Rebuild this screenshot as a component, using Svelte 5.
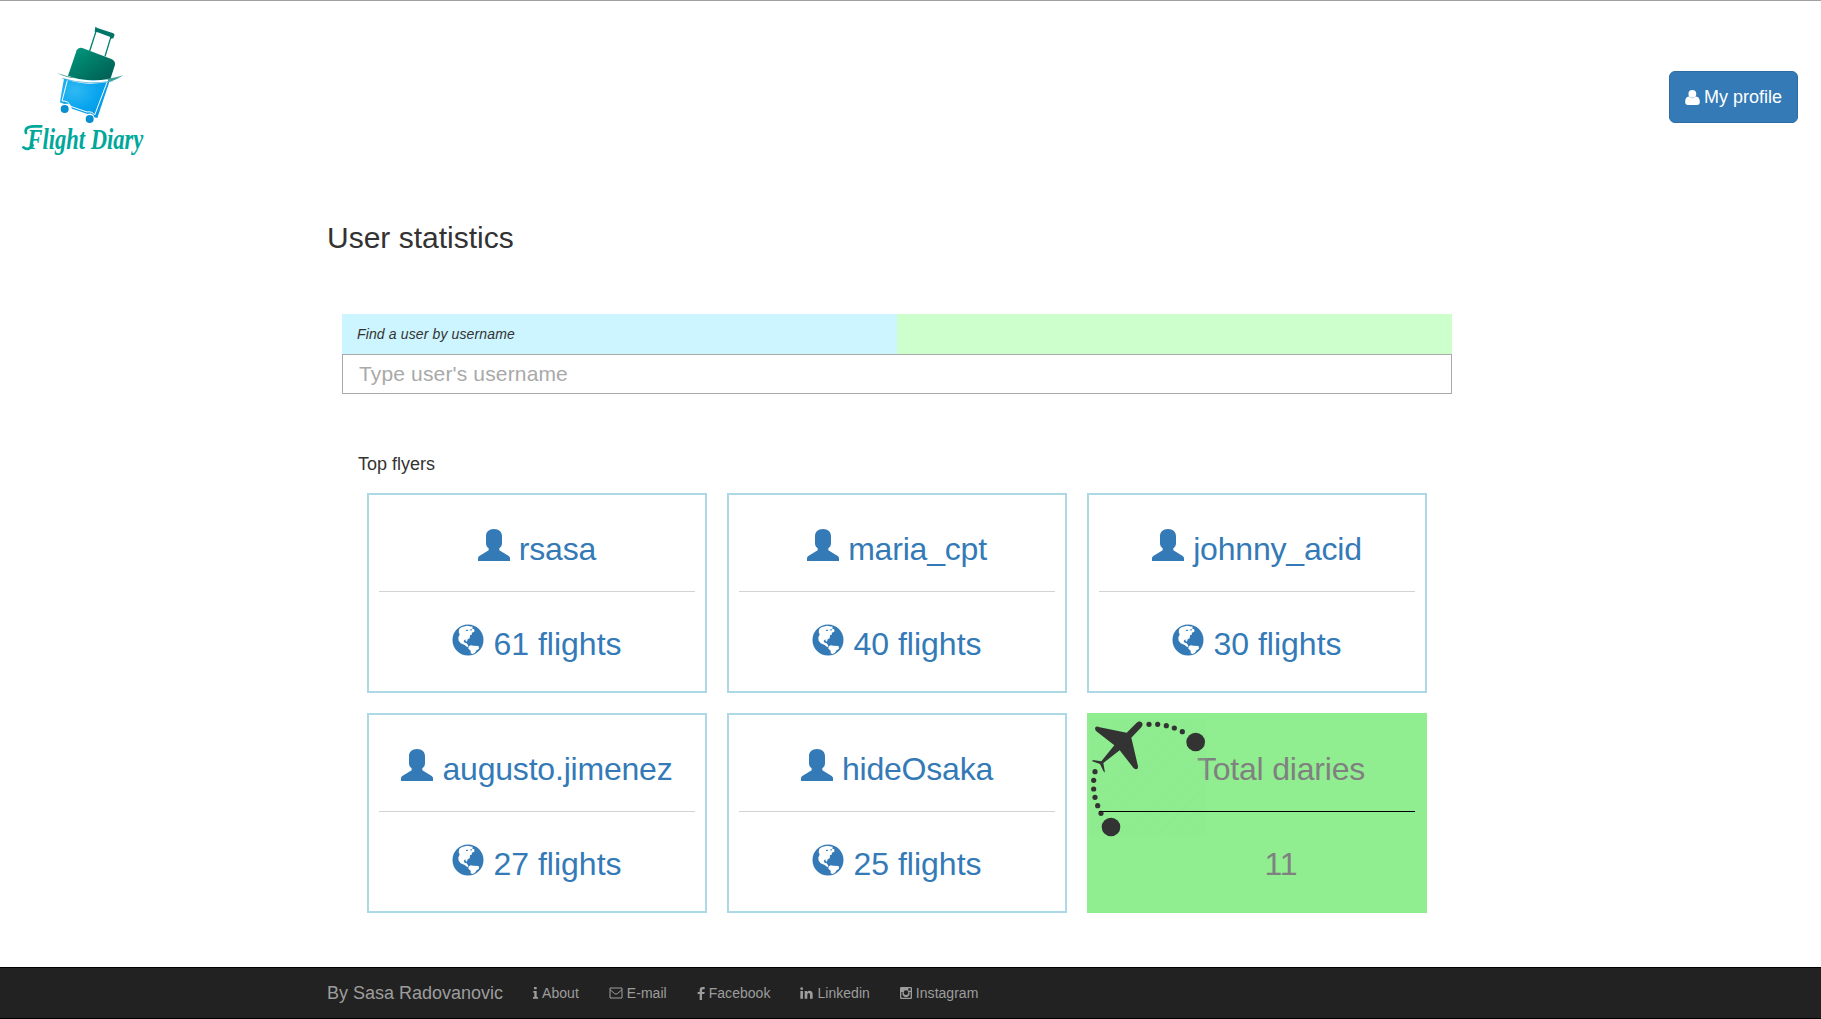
<script>
  const flyers = [
    { name: 'rsasa', flights: 61 },
    { name: 'maria_cpt', flights: 40 },
    { name: 'johnny_acid', flights: 30 },
    { name: 'augusto.jimenez', flights: 27 },
    { name: 'hideOsaka', flights: 25 }
  ];
  const totalDiaries = 11;
  let query = $state('');
</script>

<div class="page">
  <header>
    <svg class="logo" viewBox="0 0 540 540" role="img" aria-label="Flight Diary">
      <defs>
        <linearGradient id="shell" x1="0" y1="0" x2="1" y2="1">
          <stop offset="0" stop-color="#009b80" />
          <stop offset="1" stop-color="#00594f" />
        </linearGradient>
        <radialGradient id="base" cx=".3" cy=".3" r=".8">
          <stop offset="0" stop-color="#30b9f2" />
          <stop offset=".6" stop-color="#08a4ef" />
          <stop offset="1" stop-color="#0795dc" />
        </radialGradient>
      </defs>
      <path d="M288 94L269 153M333 110L315 169" stroke="#008070" stroke-width="4" fill="none" />
      <path d="M286 80L292 84L340 100L344 104L340 115L333 116L329 110L293 97L284 95Z" fill="#007568" />
      <path d="M230 151Q235 141 247 144L334 177Q346 182 345 194L330 241Q268 252 204 227Z" fill="url(#shell)" />
      <path d="M192 236L329 243L292 354L283 352Q278 337 263 342L216 326Q210 307 193 312L180 307L186 270Z" fill="url(#base)" />
      <path d="M202 241L186 303Q205 301 212 319L261 336Q276 333 284 345L321 247" fill="none" stroke="#fff" stroke-width="3" />
      <path d="M171 219Q207 236 267 241Q325 243 370 226Q336 252 266 251Q201 248 171 219Z" fill="#fff" />
      <path d="M171 219Q202 230 232 235Q200 235 171 219ZM370 226Q350 233 322 236L326 247Q350 240 370 226Z" fill="#3f9f95" />
      <path d="M186 235Q265 258 340 242" fill="none" stroke="#3aa9cf" stroke-width="2" />
      <circle cx="194" cy="327" r="12" fill="#078fd0" />
      <circle cx="269" cy="357" r="12" fill="#078fd0" />
      <path d="M70 442Q84 454 98 436M78 399Q72 380 100 379L124 379" class="swash" />
      <text class="wordmark" x="82" y="446" textLength="348" lengthAdjust="spacingAndGlyphs">Flight Diary</text>
    </svg>
    <button class="profile" type="button">
      <svg class="profile-icon" viewBox="0 0 45 46">
        <circle cx="22" cy="12" r="12" />
        <path d="M11 20Q22 30 33 20Q45 21 45 37Q45 46 36 46H9Q0 46 0 37Q0 21 11 20Z" />
      </svg>
      <span>My profile</span>
    </button>
  </header>

  <main>
    <h1>User statistics</h1>
    <section class="search">
      <label for="username">Find a user by username</label>
      <input id="username" type="text" placeholder="Type user's username" bind:value={query} />
    </section>

    <h2>Top flyers</h2>
    <section class="cards">
      {#each flyers as flyer}
        <article class="card">
          <div class="line name">
            <svg class="icon" viewBox="0 0 96 96">
              <path d="M48 0C63 0 72 9 72 22V42C72 50 69 54 64 58V64L92 81Q96 84 96 88V96H0V88Q0 84 4 81L32 64V58C27 54 24 50 24 42V22C24 9 33 0 48 0Z" />
            </svg>
            <span>{flyer.name}</span>
          </div>
          <hr />
          <div class="line">
            <svg class="icon" viewBox="0 0 96 96">
              <circle cx="48" cy="48" r="46.5" />
              <path class="land" d="M22 14L30 9L45 5L62 8L61 14L67 16V23L60 26L59 32L54 34L53 43L47 46L45 53L41 51L40 46L35 50L38 56L44 58L49 65L46 70L38 63L26 58L20 50L19 40L23 32L20 24ZM50 67L57 64L64 65L80 66L81 74L74 79L69 86L62 90L56 88V80L49 74Z" />
              <path d="M42 18L48 17L47 21H42ZM56 15L60 16L58 20L55 19Z" />
            </svg>
            <span>{flyer.flights} flights</span>
          </div>
        </article>
      {/each}

      <article class="card total">
        <svg class="route" viewBox="81 69 360 390">
          <defs>
            <pattern id="stripes" width="8" height="8" patternUnits="userSpaceOnUse" patternTransform="rotate(-45)">
              <path d="M0 2H8" stroke="#85df88" stroke-width="2" />
            </pattern>
          </defs>
          <path d="M89 87H440V440H89Z" fill="url(#stripes)" opacity=".6" />
          <path d="M107 111Q111 108 119 112L200 128L230 98Q239 91 246 98Q250 104 244 112L214 143L234 229Q235 238 228 238Q223 237 220 233L179 181L130 219L135 248L130 243L120 222L97 214L98 210L124 214L163 166L108 123Q103 116 107 111Z" />
          {#each [[267, 103], [293, 103], [319, 107], [343, 114], [367, 125], [105, 245], [101, 271], [101, 297], [105, 322], [113, 347], [123, 370]] as [x, y]}
            <circle cx={x} cy={y} r="7.8" />
          {/each}
          <circle cx="407" cy="156" r="28" />
          <circle cx="153" cy="411" r="28" />
        </svg>
        <div class="line name"><span>Total diaries</span></div>
        <hr />
        <div class="line"><span>{totalDiaries}</span></div>
      </article>
    </section>
  </main>

  <footer>
    <span class="brand">By Sasa Radovanovic</span>
    <nav>
      <a href="#about">
        <svg width="5" height="12" viewBox="0 0 15 36"><path d="M3 0H11V7H3ZM1 12H11V30H15V35H0V30H4V17H1Z" /></svg>
        About
      </a>
      <a href="#email">
        <svg width="14" height="12" viewBox="0 0 42 36"><path class="outline" d="M3 3H39V33H3ZM3 8L17 20Q21 23 25 20L39 8" /></svg>
        E-mail
      </a>
      <a href="#facebook">
        <svg width="8" height="13" viewBox="0 0 24 39"><path d="M23 0V7H18Q15 7 15 11V15H23L22 21H15V39H8V21H2V15H8V10Q8 0 17 0Z" /></svg>
        Facebook
      </a>
      <a href="#linkedin">
        <svg width="13" height="12" viewBox="0 0 39 36"><path d="M1 12H9V35H1ZM5 1Q9 1 9 5T5 9T1 5T5 1ZM14 12H21V15Q24 11 29 11Q38 11 38 22V35H30V23Q30 18 26 18Q22 18 22 23V35H14Z" /></svg>
        Linkedin
      </a>
      <a href="#instagram">
        <svg width="12" height="12" viewBox="0 0 36 36"><path fill-rule="evenodd" d="M4 0H32Q36 0 36 4V32Q36 36 32 36H4Q0 36 0 32V4Q0 0 4 0ZM25 4V11H32V4ZM4 15V32H32V15H28A11 11 0 1 1 8 15ZM18 10A7 7 0 1 0 18 24A7 7 0 1 0 18 10Z" /></svg>
        Instagram
      </a>
    </nav>
  </footer>
</div>

<style>
  :global(body) {
    background: #fff;
  }
  .page {
    box-sizing: border-box;
    height: 1019px;
    display: flex;
    flex-direction: column;
    border-top: 1px solid #a0a0a0;
    font-family: "Liberation Sans", Arial, sans-serif;
    color: #333;
  }
  header {
    display: flex;
    justify-content: space-between;
    align-items: flex-start;
    height: 179px;
    flex: none;
  }
  .logo {
    width: 180px;
    height: 180px;
    margin-top: -1px;
  }
  .wordmark {
    font: italic bold 86px "Liberation Serif", serif;
    fill: #00a79b;
  }
  .swash {
    fill: none;
    stroke: #00a79b;
    stroke-width: 8;
    stroke-linecap: round;
  }
  .profile {
    box-sizing: border-box;
    width: 129px;
    height: 52px;
    margin: 70px 23px 0 0;
    padding: 0;
    display: flex;
    align-items: center;
    justify-content: center;
    gap: 4px;
    border: 1px solid #2e6da4;
    border-radius: 6px;
    background: #337ab7;
    color: #fff;
    font: 18px/24px "Liberation Sans", Arial, sans-serif;
  }
  .profile-icon {
    width: 15px;
    height: 15px;
    fill: #fff;
  }
  main {
    width: 1140px;
    margin-left: 327px;
    flex: 1;
  }
  h1 {
    margin: 40px 0 0;
    font-size: 30px;
    line-height: 36px;
    font-weight: 400;
  }
  .search {
    width: 1110px;
    margin: 58px 0 0 15px;
    display: flex;
    flex-direction: column;
  }
  label {
    height: 40px;
    padding-left: 15px;
    background: linear-gradient(90deg, #ccf5ff 50%, #ccffcc 50%);
    font-size: 14px;
    font-style: italic;
    line-height: 40px;
    letter-spacing: .13px;
  }
  input {
    box-sizing: border-box;
    height: 40px;
    padding: 0 16px 1px;
    border: 1px solid #a9a9a9;
    border-radius: 0;
    background: #fff;
    font: 21px "Liberation Sans", Arial, sans-serif;
    letter-spacing: .15px;
    outline: none;
  }
  input::placeholder {
    color: #a9a9a9;
  }
  h2 {
    margin: 60px 0 0 31px;
    font-size: 18px;
    line-height: 20px;
    font-weight: 400;
  }
  .cards {
    display: grid;
    grid-template-columns: repeat(3, 340px);
    grid-auto-rows: 200px;
    gap: 20px;
    margin: 19px 0 0 40px;
  }
  .card {
    box-sizing: border-box;
    border: 2px solid #add8e6;
    padding: 0 10px;
    color: #337ab7;
    font-size: 32px;
  }
  .line {
    display: flex;
    height: 96px;
    box-sizing: border-box;
    padding-top: 34px;
    justify-content: center;
    gap: 9px;
    line-height: 40px;
  }
  .name {
    letter-spacing: -.2px;
  }
  .icon {
    width: 32px;
    height: 32px;
    fill: currentColor;
  }
  .icon .land {
    fill: #fff;
  }
  hr {
    margin: 0;
    border: 0;
    border-top: 1px solid #d3d3d3;
  }
  hr + .line {
    padding-top: 32px;
  }
  .total {
    position: relative;
    border-color: #90ee90;
    background: #90ee90;
    color: #808080;
  }
  .total .line {
    padding-left: 48px;
  }
  .total hr {
    position: relative;
    border-color: #000;
  }
  .route {
    position: absolute;
    left: -2px;
    top: -2px;
    width: 120px;
    height: 130px;
    fill: #333;
  }
  footer {
    box-sizing: border-box;
    flex: none;
    height: 52px;
    padding-left: 327px;
    display: flex;
    align-items: center;
    gap: 30px;
    border-top: 1px solid #000;
    border-bottom: 1px solid #000;
    background: #222;
    color: #9d9d9d;
  }
  .brand {
    font-size: 18px;
  }
  nav {
    display: flex;
    gap: 30px;
    font-size: 14px;
    letter-spacing: .03px;
  }
  nav a {
    display: flex;
    align-items: center;
    gap: 4px;
    color: inherit;
    text-decoration: none;
  }
  nav svg {
    fill: currentColor;
  }
  .outline {
    fill: none;
    stroke: currentColor;
    stroke-width: 3;
  }
</style>
